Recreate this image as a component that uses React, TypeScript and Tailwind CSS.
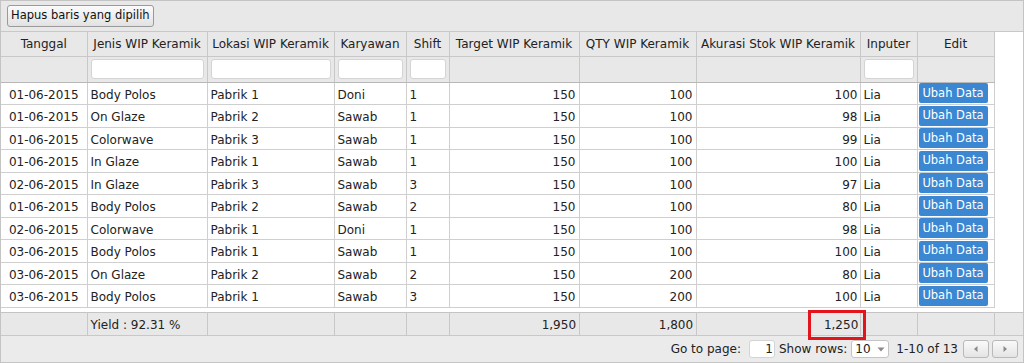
import React from 'react';

type Row = {
  tanggal: string;
  jenis: string;
  lokasi: string;
  karyawan: string;
  shift: number;
  target: number;
  qty: number;
  akurasi: number;
  inputer: string;
};

const rows: Row[] = [
  { tanggal: '01-06-2015', jenis: 'Body Polos', lokasi: 'Pabrik 1', karyawan: 'Doni', shift: 1, target: 150, qty: 100, akurasi: 100, inputer: 'Lia' },
  { tanggal: '01-06-2015', jenis: 'On Glaze', lokasi: 'Pabrik 2', karyawan: 'Sawab', shift: 1, target: 150, qty: 100, akurasi: 98, inputer: 'Lia' },
  { tanggal: '01-06-2015', jenis: 'Colorwave', lokasi: 'Pabrik 3', karyawan: 'Sawab', shift: 1, target: 150, qty: 100, akurasi: 99, inputer: 'Lia' },
  { tanggal: '01-06-2015', jenis: 'In Glaze', lokasi: 'Pabrik 1', karyawan: 'Sawab', shift: 1, target: 150, qty: 100, akurasi: 100, inputer: 'Lia' },
  { tanggal: '02-06-2015', jenis: 'In Glaze', lokasi: 'Pabrik 3', karyawan: 'Sawab', shift: 3, target: 150, qty: 100, akurasi: 97, inputer: 'Lia' },
  { tanggal: '01-06-2015', jenis: 'Body Polos', lokasi: 'Pabrik 2', karyawan: 'Sawab', shift: 2, target: 150, qty: 100, akurasi: 80, inputer: 'Lia' },
  { tanggal: '02-06-2015', jenis: 'Colorwave', lokasi: 'Pabrik 1', karyawan: 'Doni', shift: 1, target: 150, qty: 100, akurasi: 98, inputer: 'Lia' },
  { tanggal: '03-06-2015', jenis: 'Body Polos', lokasi: 'Pabrik 1', karyawan: 'Sawab', shift: 1, target: 150, qty: 100, akurasi: 100, inputer: 'Lia' },
  { tanggal: '03-06-2015', jenis: 'On Glaze', lokasi: 'Pabrik 2', karyawan: 'Sawab', shift: 2, target: 150, qty: 200, akurasi: 80, inputer: 'Lia' },
  { tanggal: '03-06-2015', jenis: 'Body Polos', lokasi: 'Pabrik 1', karyawan: 'Sawab', shift: 3, target: 150, qty: 200, akurasi: 100, inputer: 'Lia' },
];

// totals cover all 13 records, not just the visible page
const totals = { yield: '92.31 %', target: '1,950', qty: '1,800', akurasi: '1,250' };

const widths = [86, 120, 127, 72, 43, 130, 117, 164, 57, 77];
const headers = [
  'Tanggal',
  'Jenis WIP Keramik',
  'Lokasi WIP Keramik',
  'Karyawan',
  'Shift',
  'Target WIP Keramik',
  'QTY WIP Keramik',
  'Akurasi Stok WIP Keramik',
  'Inputer',
  'Edit',
];
// columns that get a filter box
const filterCols = [false, true, true, true, true, false, false, false, true, false];

const Cols = ({ extra }: { extra?: boolean }) => (
  <colgroup>
    {widths.map((w, i) => (
      <col key={i} style={{ width: w }} />
    ))}
    {extra && <col style={{ width: 28 }} />}
  </colgroup>
);

const Caret = ({ dir }: { dir: 'left' | 'right' | 'down' }) => (
  <svg width="8" height="8" viewBox="0 0 8 8" className="fill-[#8a8a8a]">
    {dir === 'left' && <path d="M5.5 1 L2 4 L5.5 7 Z" />}
    {dir === 'right' && <path d="M2.5 1 L6 4 L2.5 7 Z" />}
    {dir === 'down' && <path d="M0.5 2.5 L7.5 2.5 L4 6.5 Z" />}
  </svg>
);

const cell = 'px-[3px] pt-[3px] pb-0 border border-[#cfcfcf] whitespace-nowrap';
const sum = 'border-r border-[#c8c8c8] pt-[2px]';

export default function App() {
  return (
    <div
      className="relative w-[1024px] h-[363px] overflow-hidden bg-white text-[12px] text-[#222]"
      style={{ fontFamily: '"DejaVu Sans", Verdana, sans-serif' }}
    >
      <div className="flex flex-col h-[363px] border border-[#c4c4c4] bg-[#e8e8e8]">
        {/* toolbar */}
        <div className="h-[31px] shrink-0 flex items-center pl-[6px] border-b border-[#c8c8c8]">
          <button className="h-[22px] px-[3px] rounded-[3px] border border-[#9a9a9a] bg-gradient-to-b from-[#fbfbfb] to-[#e2e2e2] text-[11.5px] text-[#111] leading-none">
            Hapus baris yang dipilih
          </button>
        </div>

        {/* grid body */}
        <div className="bg-white h-[280px] shrink-0">
          <table className="table-fixed border-collapse w-[993px]">
            <Cols />
            <thead>
              <tr className="bg-[#e8e8e8]">
                {headers.map((h) => (
                  <th
                    key={h}
                    className="h-[24px] p-0 font-normal text-center whitespace-nowrap border border-[#c8c8c8] border-t-0 first:border-l-0"
                  >
                    {h}
                  </th>
                ))}
              </tr>
              <tr className="bg-[#e8e8e8]">
                {filterCols.map((f, i) => (
                  <th
                    key={i}
                    className="h-[26px] px-[3px] py-0 font-normal border border-[#c8c8c8] border-b-[#b8b8b8] first:border-l-0"
                  >
                    {f && (
                      <input
                        type="text"
                        className="block w-full h-[20px] rounded-[3px] border border-[#d4d4d4] bg-white outline-none"
                      />
                    )}
                  </th>
                ))}
              </tr>
            </thead>
            <tbody>
              {rows.map((r, i) => (
                <tr key={i} className="h-[22.5px]">
                  <td className={`${cell} px-0 text-center border-l-0`}>{r.tanggal}</td>
                  <td className={cell}>{r.jenis}</td>
                  <td className={cell}>{r.lokasi}</td>
                  <td className={cell}>{r.karyawan}</td>
                  <td className={cell}>{r.shift}</td>
                  <td className={`${cell} text-right`}>{r.target}</td>
                  <td className={`${cell} text-right`}>{r.qty}</td>
                  <td className={`${cell} text-right pr-[2px]`}>{r.akurasi}</td>
                  <td className={`${cell} px-[2px]`}>{r.inputer}</td>
                  <td className="pl-[1px] pr-[6px] py-0 border border-[#cfcfcf]">
                    <button className="block w-[69px] h-[20px] rounded-[2px] bg-[#3b87d2] text-white text-[11.5px] leading-none whitespace-nowrap">
                      Ubah Data
                    </button>
                  </td>
                </tr>
              ))}
            </tbody>
          </table>
        </div>

        {/* summary row */}
        <table className="table-fixed border-collapse w-[1022px] shrink-0 border-t border-[#c4c4c4]">
          <Cols extra />
          <tbody>
            <tr className="h-[22px]">
              <td className={sum} />
              <td className={`${sum} px-[3px] whitespace-nowrap`}>Yield : {totals.yield}</td>
              <td className={sum} />
              <td className={sum} />
              <td className={sum} />
              <td className={`${sum} px-[3px] text-right`}>{totals.target}</td>
              <td className={`${sum} px-[3px] text-right`}>{totals.qty}</td>
              <td className={`${sum} pr-[2px] text-right`}>{totals.akurasi}</td>
              <td className={sum} />
              <td className={sum} />
              <td />
            </tr>
          </tbody>
        </table>

        {/* pager */}
        <div className="flex-1 flex items-center justify-end pr-[5px] pt-[1px] border-t border-[#c8c8c8] bg-[#ebebeb]">
          <span>Go to page:</span>
          <input
            type="text"
            defaultValue="1"
            className="ml-[8px] w-[26px] h-[18px] rounded-[3px] border border-[#d4d4d4] bg-white text-right pr-[1px] outline-none text-[12px]"
          />
          <span className="ml-[4px]">Show rows:</span>
          <div className="ml-[4px] flex items-center justify-between w-[38px] h-[18px] px-[3px] rounded-[3px] border border-[#c4c4c4] bg-white text-[12px]">
            <span>10</span>
            <Caret dir="down" />
          </div>
          <span className="ml-[7px]">1-10 of 13</span>
          <div className="ml-[5px] flex gap-[3px]">
            <button className="w-[26px] h-[18px] flex items-center justify-center rounded-[3px] border border-[#b9b9b9] bg-gradient-to-b from-[#fafafa] to-[#e4e4e4]">
              <Caret dir="left" />
            </button>
            <button className="w-[26px] h-[18px] flex items-center justify-center rounded-[3px] border border-[#b9b9b9] bg-gradient-to-b from-[#fafafa] to-[#e4e4e4]">
              <Caret dir="right" />
            </button>
          </div>
        </div>
      </div>

      {/* highlight around the accuracy total */}
      <div className="absolute left-[808px] top-[310px] w-[58px] h-[30px] border-[3px] border-[#e3141c] pointer-events-none" />
    </div>
  );
}
